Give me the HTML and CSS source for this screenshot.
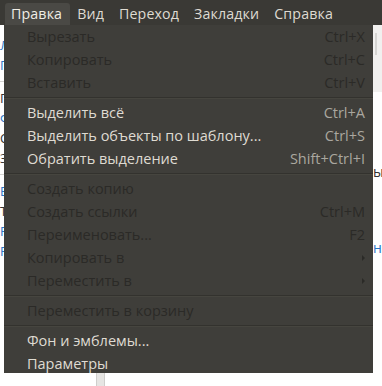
FILE: index.html
```html
<!DOCTYPE html>
<html lang="ru">
<head>
  <meta charset="UTF-8">
  <title>Правка</title>
  <link rel="stylesheet" href="styles.css">
</head>
<body>
  <div class="menubar">
    <span class="top active">Правка</span>
    <span class="top">Вид</span>
    <span class="top">Переход</span>
    <span class="top">Закладки</span>
    <span class="top">Справка</span>
  </div>

  <div class="page">
    <div class="left-col">
      <p class="frag blue">Ла</p>
      <p class="frag blue">Па</p>
      <p class="frag line"></p>
      <p class="frag dark">Пе</p>
      <p class="frag blue">Фо</p>
      <p class="frag dark">Сп</p>
      <p class="frag dark">Зу</p>
      <p class="frag line"></p>
      <p class="frag blue">Вы</p>
      <p class="frag dark">Та</p>
      <p class="frag blue">Ре</p>
      <p class="frag blue">Ро</p>
    </div>
    <div class="mid-col">
      <div class="splitter"></div>
    </div>
    <div class="right-col">
      <div class="sidebar"><div class="scroll"></div></div>
      <p class="rfrag dark">ы</p>
      <p class="rfrag blue">н</p>
    </div>
  </div>

  <div class="menu">
    <div class="item off"><span>Вырезать</span><span class="key">Ctrl+X</span></div>
    <div class="item off"><span>Копировать</span><span class="key">Ctrl+C</span></div>
    <div class="item off"><span>Вставить</span><span class="key">Ctrl+V</span></div>
    <div class="sep"></div>
    <div class="item"><span>Выделить всё</span><span class="key">Ctrl+A</span></div>
    <div class="item"><span>Выделить объекты по шаблону...</span><span class="key">Ctrl+S</span></div>
    <div class="item"><span>Обратить выделение</span><span class="key">Shift+Ctrl+I</span></div>
    <div class="sep"></div>
    <div class="item off"><span>Создать копию</span></div>
    <div class="item off"><span>Создать ссылки</span><span class="key">Ctrl+M</span></div>
    <div class="item off"><span>Переименовать...</span><span class="key">F2</span></div>
    <div class="item off"><span>Копировать в</span><span class="arrow"></span></div>
    <div class="item off"><span>Переместить в</span><span class="arrow"></span></div>
    <div class="sep"></div>
    <div class="item off"><span>Переместить в корзину</span></div>
    <div class="sep"></div>
    <div class="item"><span>Фон и эмблемы...</span></div>
    <div class="item"><span>Параметры</span></div>
  </div>
</body>
</html>
```

FILE: styles.css
```css
body {
  margin: 0;
  width: 382px;
  height: 386px;
  overflow: hidden;
  position: relative;
  background: #fff;
  font-family: "Open Sans", "DejaVu Sans", sans-serif;
  font-size: 14.5px;
}
.menubar {
  height: 25px;
  background: #3a3935;
  display: flex;
  align-items: flex-end;
  padding-left: 5px;
  box-sizing: border-box;
}
.top {
  color: #dfdbd2;
  height: 22px;
  line-height: 21px;
  padding: 0 8px 0 6px;
  margin-right: 1px;
  font-size: 14.2px;
  letter-spacing: 0.15px;
}
.top.active {
  background: #4a4945;
  border-radius: 3px 3px 0 0;
  color: #f0ede6;
}
.page {
  display: flex;
  height: 361px;
}
.left-col {
  width: 4px;
  overflow: hidden;
  padding-top: 10px;
}
.frag {
  margin: 0;
  height: 20px;
  line-height: 20px;
  white-space: nowrap;
  font-size: 13px;
}
.frag.line {
  height: 1px;
  margin: 6px 0;
  background: #d5d4d2;
}
.blue { color: #2a76c6; }
.dark { color: #333; }
.mid-col {
  flex: 1;
  display: flex;
  align-items: flex-end;
}
.splitter {
  margin-left: 92px;
  width: 7px;
  height: 14px;
  background: #e6e5e3;
  border-left: 1px solid #cfcecc;
  border-right: 1px solid #cfcecc;
}
.right-col {
  width: 9px;
  overflow: hidden;
}
.sidebar {
  height: 67px;
  background: #f1f0ef;
  padding: 8px 0 0 2px;
  box-sizing: border-box;
}
.scroll {
  width: 2px;
  height: 22px;
  background: #d6d5d3;
}
.rfrag {
  margin: 0;
  height: 20px;
  line-height: 20px;
  font-size: 14px;
}
.rfrag:first-of-type { margin-top: 70px; }
.rfrag + .rfrag { margin-top: 56px; }

.menu {
  position: absolute;
  left: 4px;
  top: 25px;
  width: 369px;
  height: 348px;
  overflow: hidden;
  background: #3f3e3a;
}
.item {
  display: flex;
  justify-content: space-between;
  align-items: center;
  height: 23px;
  padding: 0 8px 0 23px;
  box-sizing: border-box;
  color: #dfdbd2;
  white-space: nowrap;
}
.item .key { color: #aaa79f; }
.item.off, .item.off .key { color: #2b2a27; }
.arrow {
  width: 0;
  height: 0;
  border-top: 3px solid transparent;
  border-bottom: 3px solid transparent;
  border-left: 3px solid #2b2a27;
}
.sep {
  height: 7px;
  display: flex;
  align-items: center;
}
.sep::before {
  content: "";
  flex: 1;
  height: 1px;
  background: #33322e;
  border-bottom: 1px solid #46453f;
}
```
